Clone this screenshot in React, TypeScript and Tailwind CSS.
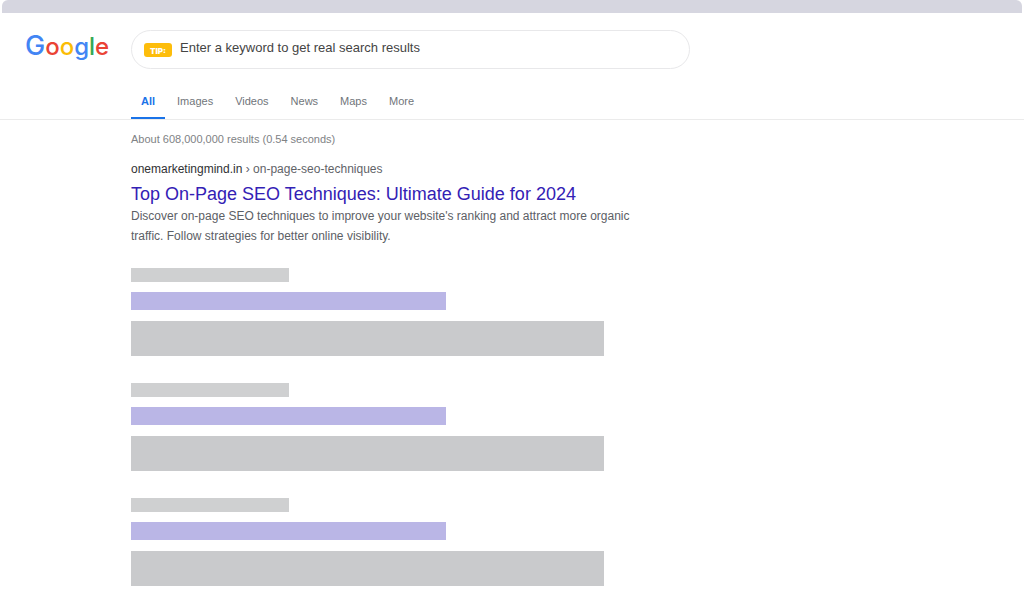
import { useState } from "react";

const LOGO_LETTERS = [
  { char: "G", style: "text-[27px] text-[#4285f4]" },
  { char: "o", style: "text-[#ea4335]" },
  { char: "o", style: "text-[#fbbc05]" },
  { char: "g", style: "text-[#4285f4]" },
  { char: "l", style: "text-[#34a853]" },
  { char: "e", style: "text-[#ea4335]" }
];

const TABS = ["All", "Images", "Videos", "News", "Maps", "More"];

function Logo() {
  return (
    <a href="#" className="w-[106px] shrink-0 font-[family-name:'Inter',sans-serif] text-[24px] leading-8 font-medium">
      {LOGO_LETTERS.map((l, i) => (
        <span key={i} className={l.style}>{l.char}</span>
      ))}
    </a>
  );
}

function PlaceholderResult() {
  return (
    <div>
      <div className="h-3.5 w-1/3 bg-[#cfd0d1]" />
      <div className="mt-2.5 h-[18px] w-2/3 bg-[#bab6e6]" />
      <div className="mt-[11px] h-[35px] bg-[#c9cacc]" />
    </div>
  );
}

export default function App() {
  const [query, setQuery] = useState("");
  const [active, setActive] = useState("All");

  return (
    <div className="min-h-screen bg-white font-['Liberation_Sans',Arial,sans-serif]">
      <div className="mx-0.5 h-[13px] rounded-t-md bg-[#d6d6e0]" />

      <header className="border-b border-[#ebebeb] pt-[17px]">
        <div className="flex items-start pl-[25px] pr-6">
          <Logo />
          <form
            onSubmit={(e) => e.preventDefault()}
            className="flex h-[39px] w-full max-w-[559px] items-center gap-2 rounded-full border border-[#e8e8ea] px-3"
          >
            <label
              htmlFor="query"
              className="rounded-[3px] bg-[#fdbd0b] px-1.5 pt-0.5 font-[family-name:'Inter',sans-serif] text-[8px] leading-3 font-black text-white"
            >
              TIP:
            </label>
            <input
              id="query"
              value={query}
              onChange={(e) => setQuery(e.target.value)}
              placeholder="Enter a keyword to get real search results"
              className="min-w-0 flex-1 pb-1 text-[13px] text-[#444] outline-none placeholder:text-[#444]"
            />
          </form>
        </div>

        <nav className="mt-[22px] flex gap-0.5 pl-[131px] text-[11px] leading-4">
          {TABS.map((tab) => (
            <button
              key={tab}
              onClick={() => setActive(tab)}
              className={
                tab === active
                  ? "border-b-2 border-[#1a73e8] px-2.5 pt-0.5 pb-2 font-bold text-[#1a73e8]"
                  : "border-b-2 border-transparent px-2.5 pt-0.5 pb-2 text-[#70757a]"
              }
            >
              {tab}
            </button>
          ))}
        </nav>
      </header>

      <main className="pt-[11px] pr-6 pb-6 pl-[131px]">
        <p className="text-[11px] leading-4 text-[#808285]">About 608,000,000 results (0.54 seconds)</p>

        <article className="mt-3.5 max-w-[520px]">
          <p className="text-[12px] leading-4 text-[#5f6368]">
            <span className="text-[#303134]">onemarketingmind.in</span> › on-page-seo-techniques
          </p>
          <h3 className="mt-1.5 text-[18px] leading-[23px] text-[#3321b5]">
            <a href="#">Top On-Page SEO Techniques: Ultimate Guide for 2024</a>
          </h3>
          <p className="text-[12px] leading-5 text-[#5c6065]">
            Discover on-page SEO techniques to improve your website's ranking and attract more organic traffic. Follow
            strategies for better online visibility.
          </p>
        </article>

        <div className="mt-[22px] flex max-w-[473px] flex-col gap-[27px]">
          <PlaceholderResult />
          <PlaceholderResult />
          <PlaceholderResult />
        </div>
      </main>
    </div>
  );
}
